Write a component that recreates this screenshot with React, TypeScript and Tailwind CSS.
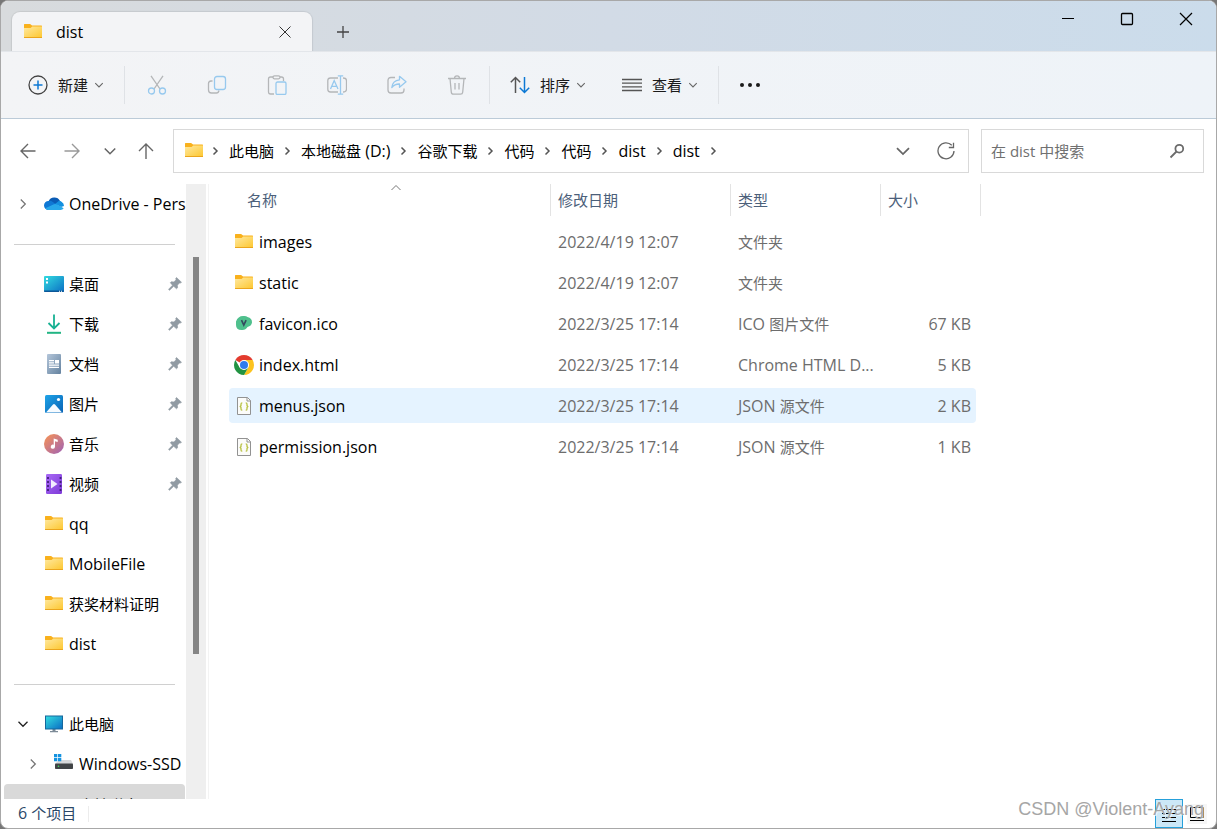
import React from "react";
import clsx from "clsx";

type IconProps = { className?: string };

// Latin runs are set one pixel larger than the Chinese ones
const Label = ({ text }: { text: string }) => (
  <>
    {text.split(/([\u4e00-\u9fff]+)/).map((part, index) =>
      index % 2 === 1 ? (
        <span key={index} className="text-[15px]">
          {part}
        </span>
      ) : (
        part
      )
    )}
  </>
);

const FolderIcon = () => (
  <svg className="size-5 shrink-0" viewBox="0 1 20 20">
    <defs>
      <linearGradient id="folder" x1="0" y1="0" x2="1" y2="1">
        <stop offset="0" stopColor="#ffe9a0" />
        <stop offset="1" stopColor="#fdc833" />
      </linearGradient>
    </defs>
    <path d="M1 3.6q0-.6.6-.6H7q.5 0 .8.4L9 4.6h9.400q.6 0 .6.6V8H1z" fill="#f9b11c" />
    <path d="M1 7h6.600l1.600-1.400H19V16H1z" fill="url(#folder)" />
    <path d="M1 16h18v.5q0 .5-.6.5H1.600q-.6 0-.6-.5z" fill="#eba51c" />
  </svg>
);

const CloudIcon = () => (
  <svg className="size-5 shrink-0" viewBox="0 0 20 20">
    <path d="M4.500 7.500A6.300 6.300 0 0 1 16 7L12 12 5 9z" fill="#0a5cb5" />
    <path d="M4.600 16A4.500 4.500 0 0 1 4.500 6.900q2.600-.3 4.300 1l6 4.100L5 16z" fill="#0f78d4" />
    <path d="M11 10l4-3.200q1.500-.1 2.500 1Q20 9 20 12l-3 1z" fill="#1490df" />
    <path d="M1.300 14.300L10 10.300q1.500-.7 3 .2l6.700 3.700Q18.600 16 16.600 16H4.500q-2 0-3.200-1.700z" fill="#28a8ea" />
  </svg>
);

const DesktopIcon = () => (
  <svg className="size-5 shrink-0" viewBox="0 0 20 20">
    <defs>
      <linearGradient id="desktop" x1="0" y1="0" x2="1" y2="1">
        <stop offset="0" stopColor="#33dbe0" />
        <stop offset="1" stopColor="#0b6fc4" />
      </linearGradient>
    </defs>
    <rect y="2" width="20" height="16" rx="1" fill="url(#desktop)" />
    <path d="M0 16.500h20v.5q0 1-1 1H1q-1 0-1-1z" fill="#0c5798" />
    <path d="M2 4h2v2H2zM2 7.500h2v2H2zM15 16.800h1v1h-1zM17 16.800h1v1h-1z" fill="#fff" />
  </svg>
);

const DownloadIcon = () => (
  <svg className="size-5 shrink-0" viewBox="0 0 20 20" fill="none" strokeWidth="1.8">
    <path d="M10 .5V14M4.500 9l5.500 5.500L15.500 9" stroke="#18b193" />
    <path d="M3 18.800h14" stroke="#22b584" strokeWidth="2" />
  </svg>
);

const DocumentIcon = () => (
  <svg className="size-5 shrink-0" viewBox="0 0 20 20">
    <defs>
      <linearGradient id="doc" x1="0" y1="0" x2="1" y2="1">
        <stop offset="0" stopColor="#b4c6da" />
        <stop offset="1" stopColor="#64829f" />
      </linearGradient>
    </defs>
    <rect x="3" width="14" height="20" rx="1" fill="url(#doc)" />
    <path d="M5 6h5v1.200H5zM5 8.200h5v1.200H5zM11 6h4v3.400h-4zM5 10.500h10v1.200H5zM5 12.800h10V14H5z" fill="#fff" />
  </svg>
);

const PictureIcon = () => (
  <svg className="size-5 shrink-0" viewBox="0 0 20 20">
    <defs>
      <linearGradient id="pic" x1="0" y1="0" x2="1" y2="1">
        <stop offset="0" stopColor="#1fa4e8" />
        <stop offset="1" stopColor="#0862b5" />
      </linearGradient>
    </defs>
    <rect x="1" y="1" width="18" height="18" rx="1.500" fill="url(#pic)" />
    <path d="M2 18.500l7-8q1-1 2 0l7 8z" fill="#f6fbff" />
    <circle cx="14.500" cy="5.500" r="1.600" fill="#fff" />
  </svg>
);

const MusicIcon = () => (
  <svg className="size-5 shrink-0" viewBox="0 0 20 20">
    <defs>
      <linearGradient id="music" x1="0" y1="0" x2="1" y2="1">
        <stop offset=".1" stopColor="#f08f5c" />
        <stop offset=".9" stopColor="#a766ad" />
      </linearGradient>
    </defs>
    <circle cx="10" cy="10" r="10" fill="url(#music)" />
    <path d="M9.700 4.500l4 1.200V8l-2.700-.7v5.500a2.100 2.100 0 1 1-1.300-2z" fill="#fff" />
  </svg>
);

const VideoIcon = () => (
  <svg className="size-5 shrink-0" viewBox="0 0 20 20">
    <defs>
      <linearGradient id="video" x1="0" y1="0" x2="1" y2="1">
        <stop offset="0" stopColor="#a86af5" />
        <stop offset="1" stopColor="#7f3ad8" />
      </linearGradient>
    </defs>
    <rect x="2" width="16" height="20" rx="1.200" fill="url(#video)" />
    <path d="M4 3v15M16.500 3v15" stroke="#43207c" strokeWidth="1.800" strokeDasharray="2 2" />
    <path d="M7 5.500l6.500 4.500L7 14.500z" fill="#f3ecff" />
  </svg>
);

const ComputerIcon = () => (
  <svg className="size-5 shrink-0" viewBox="0 0 20 20">
    <path d="M8.500 15h3v2h2.500v1.200H6V17h2.500z" fill="#7d8b97" />
    <rect x="1" y="1.500" width="18" height="14" fill="#15679c" />
    <rect x="2" y="2.500" width="16" height="12" fill="url(#desktop)" />
  </svg>
);

const DriveIcon = () => (
  <svg className="size-5 shrink-0" viewBox="0 0 20 20">
    <path d="M5 6h12l2 4H1z" fill="#d6d8da" />
    <rect x="1" y="9.500" width="18" height="5.500" rx=".8" fill="#414447" />
    <circle cx="4.500" cy="12.300" r=".8" fill="#3fe05b" />
    <path d="M0 0h3.300v3.300H0zM4 0h3.300v3.300H4zM0 4h3.300v3.300H0zM4 4h3.300v3.300H4z" fill="#1593e0" />
  </svg>
);

const FaviconIcon = () => (
  <svg className="size-5 shrink-0" viewBox="0 0 20 20">
    <path d="M2 7.500Q4 2 9 2q3-.5 4.500 1 4.700 1 4.500 5.500-.5 3.500-4.500 4.500-2 3.500-6 3-5.500 0-5.500-5z" fill="#4fc08d" />
    <path d="M7.500 6.200l2.300 5 2.300-5" fill="none" stroke="#34495e" strokeWidth="1.600" />
  </svg>
);

const ChromeIcon = () => (
  <svg className="size-5 shrink-0" viewBox="0 0 20 20">
    <path d="M10 10L1.340 5A10 10 0 0 1 18.660 5z" fill="#e33b2e" />
    <path d="M10 5H18.660A10 10 0 0 1 10 20L14.300 12.500z" fill="#fcc31e" />
    <path d="M1.340 5A10 10 0 0 0 10 20L14.330 12.500H5.670z" fill="#229342" />
    <circle cx="10" cy="10" r="5" fill="#fff" />
    <circle cx="10" cy="10" r="4" fill="#2f7bee" />
  </svg>
);

const JsonIcon = () => (
  <svg className="size-5 shrink-0" viewBox="0 0 20 20" fill="none">
    <path d="M3.500 1.500h10l3 3v14h-13z" fill="#fcfcfa" stroke="#929292" />
    <path d="M13 1.500v3.500h3.500" stroke="#929292" />
    <path d="M8.300 6.800q-1.300 0-1.300 1.200v1.500L6.200 10.500l.8 1V13q0 1.200 1.300 1.200M11.700 6.800q1.300 0 1.300 1.200v1.500l.8 1-.8 1V13q0 1.200-1.300 1.200" stroke="#b9c244" strokeWidth="1.300" />
  </svg>
);

const PinIcon = () => (
  <svg className="size-3.5 shrink-0" viewBox="0 0 14 14">
    <path d="M8.500.5l5 4.800-1.200.8-.9-.1-2 2.200.2 2.600-1.100 1L5.700 9.300 1.500 13.300l-1-.9L4.500 8.200 2.300 5.700l1.100-1 2.600.3 2-2.300-.3-1.200z" fill="#919ba3" stroke="#919ba3" strokeWidth=".6" />
  </svg>
);

const Chevron = ({ className }: IconProps) => (
  <svg className={clsx("shrink-0", className)} viewBox="0 0 12 12" fill="none" stroke="currentColor">
    <path d="M1.500 3.800L6 8.300l4.500-4.500" strokeWidth="1.300" />
  </svg>
);

const CrumbChevron = () => (
  <svg className="mx-[7px] h-3 w-[13px] shrink-0 text-[#555]" viewBox="0 0 13 12" fill="none" stroke="currentColor">
    <path d="M4.500 2.500L8 6l-3.500 3.500" strokeWidth="1.500" />
  </svg>
);

const toolIcons: { name: string; icon: React.ReactNode }[] = [
  {
    name: "剪切",
    icon: (
      <>
        <path d="M4 .8L13 14M16 .8L7 14" stroke="#b4b6b8" />
        <circle cx="4.500" cy="16" r="3" stroke="#97c9ee" />
        <circle cx="15.500" cy="16" r="3" stroke="#97c9ee" />
      </>
    ),
  },
  {
    name: "复制",
    icon: (
      <>
        <path d="M5.500 6H4Q1.500 6 1.500 8.500V15q0 3 3 3h5q2 0 2.500-2.500" stroke="#b4b6b8" />
        <rect x="7.500" y="1.500" width="11" height="13" rx="2.500" stroke="#97c9ee" />
      </>
    ),
  },
  {
    name: "粘贴",
    icon: (
      <>
        <path d="M7 19H3.500Q1.500 19 1.500 17V4q0-2 2-2H6M13 2h1.500q2 0 2 2v2" stroke="#b4b6b8" />
        <rect x="6" y=".8" width="7" height="3" rx="1.500" stroke="#b4b6b8" />
        <rect x="9" y="7" width="10" height="12.500" rx="1.500" stroke="#97c9ee" />
      </>
    ),
  },
  {
    name: "重命名",
    icon: (
      <>
        <path d="M11 3H3.500Q.8 3 .8 5.700v8.600Q.8 17 3.500 17H11M16 3q3.500 0 3.500 3v8q0 3-3.500 3" stroke="#b4b6b8" />
        <path d="M3.500 14l3.700-8.500L11 14M4.800 11.300h4.800M13.500 1v18M10.800 .8h5.400M10.800 19.200h5.400" stroke="#97c9ee" />
      </>
    ),
  },
  {
    name: "共享",
    icon: (
      <>
        <path d="M8 2.500H4Q1 2.500 1 5.500V15q0 3 3 3h10q3 0 3-3v-1.500" stroke="#b4b6b8" />
        <path d="M12.500 1.300l6.500 5.500-6.500 5.500V9Q8 8.800 4.800 12.500 5.500 5.500 12.500 4.800z" stroke="#97c9ee" strokeLinejoin="round" />
      </>
    ),
  },
  {
    name: "删除",
    icon: (
      <path
        d="M1 3.500h18M7.500 3.500Q7.500.8 10 .8t2.500 2.700M3 3.500l1.300 13.700q.2 2 2.200 2h7q2 0 2.200-2L17 3.500M8 8v6.500M12 8v6.500"
        stroke="#b4b6b8"
      />
    ),
  },
];

const quickAccess = [
  { label: "桌面", icon: <DesktopIcon />, pinned: true },
  { label: "下载", icon: <DownloadIcon />, pinned: true },
  { label: "文档", icon: <DocumentIcon />, pinned: true },
  { label: "图片", icon: <PictureIcon />, pinned: true },
  { label: "音乐", icon: <MusicIcon />, pinned: true },
  { label: "视频", icon: <VideoIcon />, pinned: true },
  { label: "qq", icon: <FolderIcon />, pinned: false },
  { label: "MobileFile", icon: <FolderIcon />, pinned: false },
  { label: "获奖材料证明", icon: <FolderIcon />, pinned: false },
  { label: "dist", icon: <FolderIcon />, pinned: false },
];

const crumbs = ["此电脑", "本地磁盘 (D:)", "谷歌下载", "代码", "代码", "dist", "dist"];

const files = [
  { name: "images", date: "2022/4/19 12:07", type: "文件夹", size: "", icon: <FolderIcon /> },
  { name: "static", date: "2022/4/19 12:07", type: "文件夹", size: "", icon: <FolderIcon /> },
  { name: "favicon.ico", date: "2022/3/25 17:14", type: "ICO 图片文件", size: "67 KB", icon: <FaviconIcon /> },
  { name: "index.html", date: "2022/3/25 17:14", type: "Chrome HTML D...", size: "5 KB", icon: <ChromeIcon /> },
  { name: "menus.json", date: "2022/3/25 17:14", type: "JSON 源文件", size: "2 KB", icon: <JsonIcon />, active: true },
  { name: "permission.json", date: "2022/3/25 17:14", type: "JSON 源文件", size: "1 KB", icon: <JsonIcon /> },
];

const TitleBar = () => (
  <header className="flex h-[50px] shrink-0 items-start justify-between bg-linear-to-r from-[#d8dbdd] via-[#d2dbe6] to-[#cbdceb]">
    <div className="flex h-full items-end pl-[11px]">
      <div className="flex h-[39px] w-[300px] items-center rounded-t-lg bg-[#f3f4f6] pl-[11px] pr-5 shadow-[0_0_1px_1px_#00000014]">
        <FolderIcon />
        <span className="ml-[13px] flex-1">dist</span>
        <button aria-label="关闭标签页" className="text-[#333]">
          <svg className="size-3.5" viewBox="0 0 14 14" stroke="currentColor">
            <path d="M1.500 1.500l11 11M12.500 1.500l-11 11" />
          </svg>
        </button>
      </div>
      <button aria-label="新建标签页" className="grid h-[38px] w-[62px] place-items-center text-[#444]">
        <svg className="size-3.5" viewBox="0 0 14 14" stroke="currentColor" strokeWidth="1.300">
          <path d="M7 1v12M1 7h12" />
        </svg>
      </button>
    </div>
    <div className="flex h-9 pr-px">
      <button aria-label="最小化" className="grid w-[59px] place-items-center">
        <svg className="size-3.5" viewBox="0 0 14 14" stroke="#000">
          <path d="M1 6.500h12" />
        </svg>
      </button>
      <button aria-label="最大化" className="grid w-[59px] place-items-center">
        <svg className="size-3.5" viewBox="0 0 14 14" stroke="#000" fill="none" strokeWidth="1.300">
          <rect x="1.500" y="1.500" width="11" height="11" rx="1" />
        </svg>
      </button>
      <button aria-label="关闭" className="grid w-[59px] place-items-center">
        <svg className="size-3.5" viewBox="0 0 14 14" stroke="#000" strokeWidth="1.200">
          <path d="M1 1l12 12M13 1L1 13" />
        </svg>
      </button>
    </div>
  </header>
);

const Divider = () => <div className="h-[38px] w-px bg-[#dfe2e6]" />;

const ToolMenu = ({ text, children }: { text: string; children: React.ReactNode }) => (
  <button className="flex items-center text-[#1a1a1a]">
    <svg className="mr-2.5 size-5" viewBox="0 0 20 20" fill="none" strokeWidth="1.300">
      {children}
    </svg>
    <Label text={text} />
    <Chevron className="ml-1.5 size-2.5 text-[#666]" />
  </button>
);

const Toolbar = () => (
  <div className="flex h-[68px] shrink-0 items-center border-y border-t-[#e3e6ea] border-b-[#bccbd8] bg-linear-to-r from-[#f3f4f6] to-[#eef3f8] pl-[27px]">
    <ToolMenu text="新建">
      <circle cx="10" cy="10" r="9" stroke="#444" />
      <path d="M10 5.500v9M5.500 10h9" stroke="#0c78d4" strokeWidth="1.500" />
    </ToolMenu>
    <div className="ml-5 flex items-center">
      <Divider />
      <div className="flex px-0.5">
        {toolIcons.map(({ name, icon }) => (
          <button key={name} aria-label={name} disabled className="grid w-[60px] place-items-center">
            <svg className="size-5" viewBox="0 0 20 20" fill="none" strokeWidth="1.300">
              {icon}
            </svg>
          </button>
        ))}
      </div>
      <Divider />
    </div>
    <div className="ml-5 flex gap-9">
      <ToolMenu text="排序">
        <path d="M5.500 18V2.500M.8 7.200l4.700-4.700 4.700 4.700" stroke="#555" strokeWidth="1.500" />
        <path d="M14.500 2v15.500M9.800 12.800l4.700 4.700 4.700-4.700" stroke="#0c78d4" strokeWidth="1.500" />
      </ToolMenu>
      <ToolMenu text="查看">
        <path d="M0 4.500h20M0 8.200h20M0 11.900h20M0 15.500h20" stroke="#555" />
      </ToolMenu>
    </div>
    <div className="ml-5 flex items-center gap-[21px]">
      <Divider />
      <button aria-label="更多">
        <svg className="size-5" viewBox="0 0 20 20" fill="#1a1a1a">
          <circle cx="2" cy="10" r="2" />
          <circle cx="10" cy="10" r="2" />
          <circle cx="18" cy="10" r="2" />
        </svg>
      </button>
    </div>
  </div>
);

const AddressRow = () => (
  <div className="flex h-[65px] shrink-0 items-start pl-[5px] pr-3 pt-2.5">
    <nav className="flex h-11 text-[#666]">
      <button aria-label="后退" className="grid w-11 place-items-center">
        <svg className="size-4" viewBox="0 0 16 16" fill="none" stroke="currentColor" strokeWidth="1.400">
          <path d="M15.500 8H1M8 1L1 8l7 7" />
        </svg>
      </button>
      <button aria-label="前进" className="grid w-11 place-items-center text-[#999]">
        <svg className="size-4" viewBox="0 0 16 16" fill="none" stroke="currentColor" strokeWidth="1.400">
          <path d="M.5 8H15M8 1l7 7-7 7" />
        </svg>
      </button>
      <button aria-label="最近的位置" className="grid w-8 place-items-center">
        <Chevron className="size-3.5" />
      </button>
      <button aria-label="上一级" className="grid w-10 place-items-center">
        <svg className="size-4" viewBox="0 0 16 16" fill="none" stroke="currentColor" strokeWidth="1.400">
          <path d="M8 16V1M1 8l7-7 7 7" />
        </svg>
      </button>
    </nav>
    <div className="ml-[7px] flex h-11 flex-1 items-center border border-[#d9d9d9] pl-2.5">
      <FolderIcon />
      <ol className="-ml-0.5 flex flex-1 items-center">
        {crumbs.map((crumb, index) => (
          <li key={index} className="flex items-center">
            <CrumbChevron />
            <button>
              <Label text={crumb} />
            </button>
          </li>
        ))}
        <li>
          <CrumbChevron />
        </li>
      </ol>
      <button aria-label="历史记录" className="grid w-[42px] place-items-center text-[#666]">
        <Chevron className="size-4" />
      </button>
      <button aria-label="刷新" className="grid w-11 place-items-center text-[#666]">
        <svg className="size-[18px]" viewBox="0 0 18 18" fill="none" stroke="currentColor" strokeWidth="1.300">
          <path d="M14.800 3.300A8 8 0 1 0 17 9M16.500.8v4.700h-4.700" />
        </svg>
      </button>
    </div>
    <label className="ml-3 flex h-11 w-[223px] items-center border border-[#d9d9d9] pl-[9px] pr-[18px]">
      <input
        aria-label="搜索"
        placeholder="在 dist 中搜索"
        className="min-w-0 flex-1 text-[15px] outline-none placeholder:text-[#707070]"
      />
      <svg className="size-4" viewBox="0 0 16 16" fill="none" stroke="#6b6b6b" strokeWidth="1.800">
        <circle cx="10.300" cy="5.700" r="3.900" />
        <path d="M7.500 8.500l-6 6" />
      </svg>
    </label>
  </div>
);

const Separator = () => (
  <li className="flex h-10 items-center pl-[13px] pr-[11px]">
    <hr className="flex-1 border-[#d0d0d0]" />
  </li>
);

const Sidebar = () => (
  <aside className="flex shrink-0">
    <ul className="w-[185px] overflow-hidden">
      <li className="flex h-10 items-center whitespace-nowrap pl-4">
        <Chevron className="size-3 -rotate-90 text-[#777]" />
        <a href="#onedrive" className="ml-[15px] flex items-center gap-[5px]">
          <CloudIcon />
          OneDrive - Personal
        </a>
      </li>
      <Separator />
      {quickAccess.map(({ label, icon, pinned }) => (
        <li key={label} className="flex h-10 items-center justify-between pl-[43px] pr-1">
          <a href={`#${label}`} className="flex items-center gap-[5px]">
            {icon}
            <span>
              <Label text={label} />
            </span>
          </a>
          {pinned && <PinIcon />}
        </li>
      ))}
      <Separator />
      <li className="flex h-10 items-center pl-4">
        <Chevron className="size-3 text-[#222]" />
        <a href="#pc" className="ml-[15px] flex items-center gap-[5px]">
          <ComputerIcon />
          <Label text="此电脑" />
        </a>
      </li>
      <li className="flex h-10 items-center whitespace-nowrap pl-[26px]">
        <Chevron className="size-3 -rotate-90 text-[#777]" />
        <a href="#ssd" className="ml-[15px] flex items-center gap-[5px]">
          <DriveIcon />
          Windows-SSD
        </a>
      </li>
      <li className="ml-[3px] mr-px flex h-10 items-center rounded-sm bg-[#d9d9d9] pl-[75px] pt-0.5">
        <a href="#d" className="whitespace-nowrap">
          <Label text="本地磁盘 (D:)" />
        </a>
      </li>
    </ul>
    <div className="w-5 bg-[#efefef] pl-[7px] pt-[73px]">
      <div className="h-[397px] w-1.5 bg-[#858585]" />
    </div>
    <div className="ml-0.5 w-px bg-[#f3f3f3]" />
  </aside>
);

const headCell = "border-l border-[#e3e3e3] pl-[7px] text-left font-normal";

const FileList = () => (
  <main className="relative flex-1 overflow-hidden pl-5">
    <svg
      className="absolute left-[181px] top-0 h-2 w-3"
      viewBox="0 0 12 8"
      fill="none"
      stroke="#777"
    >
      <path d="M1.500 6L6 1.500 10.500 6" />
    </svg>
    <table className="w-[752px] table-fixed border-separate border-spacing-0">
      <colgroup>
        <col className="w-[321px]" />
        <col className="w-[180px]" />
        <col className="w-[150px]" />
        <col className="w-[101px]" />
      </colgroup>
      <thead className="text-[#4c607a]">
        <tr className="h-8">
          <th className="pl-[18px] text-left font-normal">
            <Label text="名称" />
          </th>
          <th className={headCell}>
            <Label text="修改日期" />
          </th>
          <th className={headCell}>
            <Label text="类型" />
          </th>
          <th className={clsx(headCell, "border-r")}>
            <Label text="大小" />
          </th>
        </tr>
      </thead>
      <tbody className="before:block before:h-[5px]">
        {files.map(({ name, date, type, size, icon, active }) => {
          const cell = clsx("flex h-[35px] items-center", active && "bg-[#e5f3ff]");
          return (
            <tr key={name} className="text-[#6d6d6d]">
              <td className="py-[3px]">
                <div className={clsx(cell, "gap-[5px] rounded-l-sm pl-[5px] text-black")}>
                  {icon}
                  {name}
                </div>
              </td>
              <td>
                <div className={clsx(cell, "pl-2")}>{date}</div>
              </td>
              <td>
                <div className={clsx(cell, "whitespace-nowrap pl-2")}>
                  <span>
                    <Label text={type} />
                  </span>
                </div>
              </td>
              <td>
                <div className={clsx(cell, "mr-[5px] justify-end rounded-r-sm pr-[5px]")}>{size}</div>
              </td>
            </tr>
          );
        })}
      </tbody>
    </table>
  </main>
);

const StatusBar = () => (
  <footer className="relative flex h-[29px] shrink-0 items-center pl-[17px] pr-[9px] text-[#2b4768]">
    <span className="pb-0.5">
      <Label text="6 个项目" />
    </span>
    <div className="ml-3 h-4 w-px bg-[#ececec]" />
    <div className="ml-auto flex h-full items-center gap-1">
      <button aria-label="详细信息" className="grid h-full w-7 place-items-center border border-[#26a0da] bg-[#cce8f7]">
        <svg className="size-4" viewBox="0 0 16 16" stroke="#000">
          <path d="M1 3.500h3M5 3.500h10M1 7.500h3M5 7.500h10M1 11.500h3M5 11.500h10M1 15.500h14" />
        </svg>
      </button>
      <button aria-label="大图标" className="grid h-5 w-5 place-items-center bg-[#f6f6f6]">
        <svg className="size-4" viewBox="0 0 16 16" fill="none" stroke="#000">
          <path d="M1.500 1.500h13v10h-13zM1 14.500h14" />
        </svg>
      </button>
    </div>
    <span className="pointer-events-none absolute bottom-[9px] right-3 font-['Liberation_Sans',sans-serif] text-lg leading-5 text-[#a6a6a6] [text-shadow:1px_1px_0_#ffffffb0]">
      CSDN @Violent-Ayang
    </span>
  </footer>
);

export default function App() {
  return (
    <div className="h-screen bg-[#777] font-['Open_Sans','Noto_Sans_CJK_SC',sans-serif] text-base leading-5 text-black">
      <div className="flex h-full flex-col overflow-hidden rounded-lg border border-[#a8a8a8] bg-white">
        <TitleBar />
        <Toolbar />
        <AddressRow />
        <div className="flex min-h-0 flex-1">
          <Sidebar />
          <FileList />
        </div>
        <StatusBar />
      </div>
    </div>
  );
}
